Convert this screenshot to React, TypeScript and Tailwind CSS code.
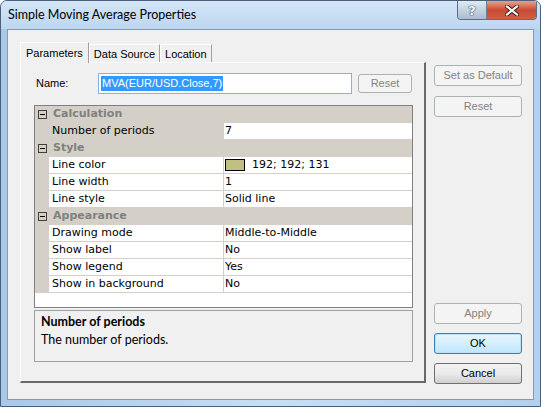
import React from "react";

type Row = { label: string; value: string; selected?: boolean; swatch?: boolean };
type Section = { name: string; rows: Row[] };

const sections: Section[] = [
  { name: "Calculation", rows: [{ label: "Number of periods", value: "7", selected: true }] },
  {
    name: "Style",
    rows: [
      { label: "Line color", value: "192; 192; 131", swatch: true },
      { label: "Line width", value: "1" },
      { label: "Line style", value: "Solid line" },
    ],
  },
  {
    name: "Appearance",
    rows: [
      { label: "Drawing mode", value: "Middle-to-Middle" },
      { label: "Show label", value: "No" },
      { label: "Show legend", value: "Yes" },
      { label: "Show in background", value: "No" },
    ],
  },
];

const sans = "font-['Liberation_Sans',Arial,sans-serif] text-[11px]";
const grid = "font-['DejaVu_Sans',Verdana,sans-serif] text-[11px]";
const ui = "font-['Lato','Noto_Sans',sans-serif]";

function DisabledButton({ label, className = "" }: { label: string; className?: string }) {
  return (
    <div
      className={`flex items-center justify-center rounded-[3px] border border-[#adb2b5] bg-[#f4f4f4] text-[#838383] ${sans} ${className}`}
    >
      {label}
    </div>
  );
}

function Tab({ label, active }: { label: string; active?: boolean }) {
  return (
    <div
      className={`relative flex items-center border-l border-t border-r border-l-white border-t-white border-r-[#a0a0a0] bg-[#f0f0f0] ${sans} ${
        active ? "z-10 -mb-px h-[21px] px-[5px]" : "h-[18px] px-[4px] pt-[1px]"
      }`}
    >
      {label}
    </div>
  );
}

function MinusBox() {
  return (
    <div className="flex h-[9px] w-[9px] items-center justify-center border border-[#404040] bg-[#d4d0c8]">
      <div className="h-px w-[5px] bg-black" />
    </div>
  );
}

function PropertyGrid() {
  return (
    <div className={`flex h-[203px] w-[379px] flex-col border border-[#808080] bg-white ${grid}`}>
      {sections.map((s) => (
        <div key={s.name} className="flex flex-col">
          <div className="flex h-[17px] items-center bg-[#d4d0c8]">
            <div className="flex w-[14px] justify-center pl-[1px]">
              <MinusBox />
            </div>
            <span className="pl-[4px] font-bold text-[#808080]">{s.name}</span>
          </div>
          {s.rows.map((r) => (
            <div key={r.label} className="flex h-[17px]">
              <div className="w-[14px] bg-[#d4d0c8]" />
              <div className="flex flex-1 border-b border-[#d4d0c8]">
                <div
                  className={`flex w-[175px] items-center border-r border-[#d4d0c8] pl-[3px] text-black ${
                    r.selected ? "bg-[#d4d0c8]" : "bg-white"
                  }`}
                >
                  {r.label}
                </div>
                <div className="flex flex-1 items-center gap-[7px] pl-[1px] text-black">
                  {r.swatch && <div className="h-[12px] w-[20px] border border-black bg-[#c0c083]" />}
                  <span>{r.value}</span>
                </div>
              </div>
            </div>
          ))}
        </div>
      ))}
    </div>
  );
}

export default function App() {
  return (
    <div className="relative h-[407px] w-[541px] overflow-hidden rounded-t-[7px] border border-[#4a5f78] bg-gradient-to-r from-[#a9c8e8] via-[#c8def4] to-[#b3d0ee]">
      {/* title bar */}
      <div className="flex h-[28px] items-center bg-gradient-to-b from-[#d4e6f8] to-[#bcd6f0] pl-[7px]">
        <span className={`${ui} text-[12.5px] text-black`}>Simple Moving Average Properties</span>
      </div>
      <div className="absolute right-[3px] top-0 flex h-[19px] overflow-hidden rounded-b-[4px] border border-t-0 border-[#5d6f86]">
        <div className="flex w-[29px] items-center justify-center border-r border-[#6e7d90] bg-gradient-to-b from-[#e0e9f3] via-[#c5d3e2] to-[#a9bccf]">
          <span
            className="font-['DejaVu_Sans',sans-serif] text-[13px] font-bold leading-none text-white"
            style={{ textShadow: "0 0 1px #2d3c50, 0 0 1px #2d3c50, 0 0 1px #2d3c50" }}
          >
            ?
          </span>
        </div>
        <div className="flex w-[49px] items-center justify-center bg-gradient-to-b from-[#e8a090] via-[#c94a35] to-[#d0603e]">
          <svg width="14" height="11" viewBox="0 0 14 11">
            <path d="M2 1.5 L12 9.5 M12 1.5 L2 9.5" stroke="#3a1a14" strokeWidth="4" strokeLinecap="square" />
            <path d="M2 1.5 L12 9.5 M12 1.5 L2 9.5" stroke="#ffffff" strokeWidth="2.2" strokeLinecap="square" />
          </svg>
        </div>
      </div>

      {/* client area */}
      <div className="mx-[6px] flex h-[371px] border border-[#8499b0] bg-[#f0f0f0] pl-[12px] pt-[12px]">
        {/* left: tabs */}
        <div className="flex w-[406px] flex-col">
          <div className="flex items-end">
            <Tab label="Parameters" active />
            <Tab label="Data Source" />
            <Tab label="Location" />
          </div>
          <div className="flex h-[321px] flex-col border-b-2 border-l border-r-2 border-t border-b-[#696969] border-l-white border-r-[#696969] border-t-white bg-[#f0f0f0] pl-[13px] pt-[10px]">
            <div className="flex h-[21px] items-center">
              <span className={`${sans} w-[64px] pl-[2px] text-black`}>Name:</span>
              <div className="flex h-[21px] w-[254px] items-center border border-[#7eb4ea] bg-white pl-[2px]">
                <span className={`${sans} bg-[#3399ff] px-px leading-[15px] text-white`}>MVA(EUR/USD.Close,7)</span>
              </div>
              <DisabledButton label="Reset" className="ml-[6px] h-[19px] w-[54px]" />
            </div>
            <div className="mt-[11px]">
              <PropertyGrid />
            </div>
            <div className="mt-[2px] flex h-[52px] w-[379px] flex-col border border-[#a0a0a0] pl-[6px] pt-[2px]">
              <span className={`${ui} text-[12.5px] font-bold leading-[18px] text-black`}>Number of periods</span>
              <span className={`${ui} text-[12.5px] leading-[18px] text-black`}>The number of periods.</span>
            </div>
          </div>
        </div>

        {/* right: buttons */}
        <div className="ml-[8px] flex w-[88px] flex-col pt-[23px] pb-[15px]">
          <DisabledButton label="Set as Default" className="h-[21px]" />
          <DisabledButton label="Reset" className="mt-[10px] h-[21px]" />
          <div className="flex-1" />
          <DisabledButton label="Apply" className="h-[21px]" />
          <div
            className={`mt-[9px] flex h-[21px] items-center justify-center rounded-[3px] border border-[#3c7fb1] bg-gradient-to-b from-[#eaf6fd] to-[#bee6fd] text-black ${sans} shadow-[inset_0_0_0_1px_#b8e2fa]`}
          >
            OK
          </div>
          <div
            className={`mt-[9px] flex h-[21px] items-center justify-center rounded-[3px] border border-[#707070] bg-gradient-to-b from-[#f2f2f2] via-[#ebebeb] to-[#cfcfcf] text-black ${sans}`}
          >
            Cancel
          </div>
        </div>
      </div>
    </div>
  );
}
